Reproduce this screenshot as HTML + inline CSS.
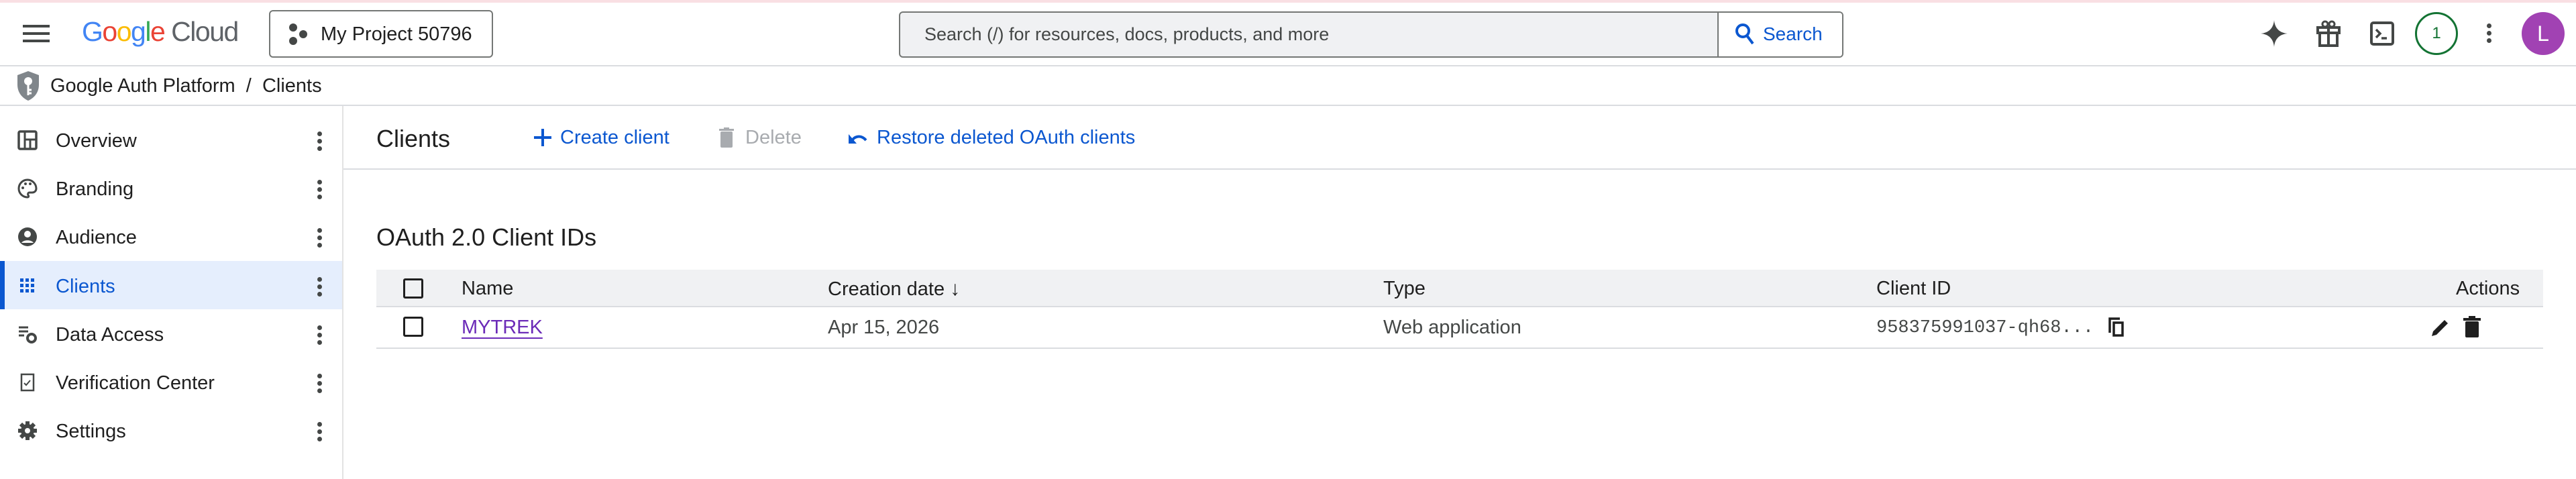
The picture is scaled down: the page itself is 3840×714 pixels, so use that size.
<!DOCTYPE html>
<html><head><meta charset="utf-8"><style>
*{margin:0;padding:0;box-sizing:border-box}
body{width:3840px;height:714px;background:#fff;font-family:"Liberation Sans",Arial,sans-serif;color:#1f1f1f;position:relative;overflow:hidden}
.a{position:absolute}
.t{white-space:nowrap}
.nav{position:absolute;left:0;width:510px;height:72px}
.nav .lab{position:absolute;left:83px;top:22px;font-size:29px;color:#1f1f1f}
.nav .ic{position:absolute;left:26px;top:22px;width:30px;height:30px}
.dots{position:absolute;width:8px}
.dots i{display:block;width:7px;height:7px;border-radius:50%;background:#444746;margin:0 0 4px 0}
.cb{position:absolute;width:30px;height:30px;border:3.5px solid #1f1f1f;border-radius:3px}
</style></head><body>
<div class="a" style="left:0;top:0;width:3840px;height:4px;background:#f9dfe3"></div>
<div class="a" style="left:34px;top:37px;width:40px;height:26px">
<div style="height:4px;background:#444746;margin-bottom:7px"></div><div style="height:4px;background:#444746;margin-bottom:7px"></div><div style="height:4px;background:#444746"></div></div>
<div class="a t" style="left:122px;top:24px;font-size:41px;letter-spacing:-1.5px"><span style="color:#4285f4">G</span><span style="color:#ea4335">o</span><span style="color:#fbbc04">o</span><span style="color:#4285f4">g</span><span style="color:#34a853">l</span><span style="color:#ea4335">e</span> <span style="color:#5f6368">Cloud</span></div>
<div class="a" style="left:401px;top:15px;width:334px;height:71px;border:2px solid #747775;border-radius:6px"></div>
<svg class="a" style="left:428px;top:34px" width="34" height="34" viewBox="0 0 34 34"><circle cx="9" cy="7" r="6" fill="#444746"/><circle cx="24" cy="17" r="6" fill="#444746"/><circle cx="9" cy="27" r="6" fill="#444746"/></svg>
<div class="a t" style="left:478px;top:35px;font-size:29px;color:#1f1f1f">My Project 50796</div>
<div class="a" style="left:1340px;top:17px;width:1408px;height:69px;border:2px solid #747775;border-radius:6px;background:#f0f1f3;overflow:hidden">
<div class="a" style="left:1218px;top:0;width:190px;height:69px;background:#fff;border-left:2px solid #747775"></div></div>
<div class="a t" style="left:1378px;top:36px;font-size:27px;color:#444746">Search (/) for resources, docs, products, and more</div>
<svg class="a" style="left:2586px;top:34px" width="30" height="34" viewBox="0 0 30 34"><circle cx="12" cy="12" r="9" fill="none" stroke="#0b57d0" stroke-width="4"/><path d="M18 19l9 12" stroke="#0b57d0" stroke-width="4"/></svg>
<div class="a t" style="left:2628px;top:35px;font-size:28px;color:#0b57d0">Search</div>
<svg class="a" style="left:3370px;top:30px" width="40" height="40" viewBox="0 0 40 40"><path d="M20 0C21 12 28 19 40 20 28 21 21 28 20 40 19 28 12 21 0 20 12 19 19 12 20 0Z" fill="#444746"/></svg>
<svg class="a" style="left:3452px;top:30px" width="38" height="40" viewBox="0 0 38 40"><rect x="3" y="11" width="32" height="8" fill="none" stroke="#444746" stroke-width="4"/><rect x="6" y="19" width="26" height="19" fill="none" stroke="#444746" stroke-width="4"/><path d="M19 11v27" stroke="#444746" stroke-width="4"/><circle cx="14" cy="6" r="4" fill="none" stroke="#444746" stroke-width="3"/><circle cx="24" cy="6" r="4" fill="none" stroke="#444746" stroke-width="3"/></svg>
<svg class="a" style="left:3533px;top:32px" width="36" height="36" viewBox="0 0 36 36"><rect x="2" y="2" width="32" height="32" rx="3" fill="none" stroke="#444746" stroke-width="4"/><path d="M9 12l6 6-6 6" fill="none" stroke="#444746" stroke-width="3.5"/><path d="M17 25h8" stroke="#444746" stroke-width="3.5"/></svg>
<div class="a" style="left:3600px;top:18px;width:64px;height:64px;border:3.5px solid #137333;border-radius:50%;text-align:center;line-height:57px;font-size:24px;color:#137333">1</div>
<div class="dots" style="left:3707px;top:35px"><i></i><i></i><i></i></div>
<div class="a" style="left:3759px;top:18px;width:64px;height:64px;border-radius:50%;background:#a142b3;color:#fff;text-align:center;line-height:64px;font-size:32px">L</div>
<div class="a" style="left:0;top:97px;width:3840px;height:2px;background:#dadce0"></div>
<svg class="a" style="left:22px;top:104px" width="40" height="48" viewBox="0 0 40 48"><path d="M20 2L36 8v14c0 12-7 20-16 24C11 42 4 34 4 22V8z" fill="#80868b"/><circle cx="20" cy="17" r="6" fill="#fff"/><path d="M20 22v16M20 30h5M20 35h5" stroke="#fff" stroke-width="3"/></svg>
<div class="a t" style="left:75px;top:112px;font-size:29px;color:#1f1f1f">Google Auth Platform &nbsp;/&nbsp; Clients</div>
<div class="a" style="left:0;top:156px;width:3840px;height:2px;background:#dadce0"></div>
<div class="a" style="left:510px;top:158px;width:2px;height:556px;background:#e3e3e3"></div>
<div class="nav" style="top:172px"><svg class="ic" viewBox="0 0 30 30"><rect x="2" y="2" width="26" height="26" rx="2" fill="none" stroke="#444746" stroke-width="3.5"/><path d="M11 3v24M11 14h16M19 14v13" stroke="#444746" stroke-width="3"/></svg><div class="lab">Overview</div><div class="dots" style="left:473px;top:24px"><i></i><i></i><i></i></div></div>
<div class="nav" style="top:244px"><svg class="ic" viewBox="0 0 30 30"><path d="M15 2a13 13 0 100 26c2 0 2-2 1-3-1-2 0-4 2-4h4c4 0 6-3 6-6C28 8 22 2 15 2z" fill="none" stroke="#444746" stroke-width="3"/><circle cx="8" cy="14" r="2" fill="#444746"/><circle cx="12" cy="8" r="2" fill="#444746"/><circle cx="19" cy="8" r="2" fill="#444746"/></svg><div class="lab">Branding</div><div class="dots" style="left:473px;top:24px"><i></i><i></i><i></i></div></div>
<div class="nav" style="top:316px"><svg class="ic" viewBox="0 0 30 30"><circle cx="15" cy="15" r="14" fill="#444746"/><circle cx="15" cy="11" r="5" fill="#fff"/><path d="M6 24c3-5 15-5 18 0" fill="#fff"/></svg><div class="lab">Audience</div><div class="dots" style="left:473px;top:24px"><i></i><i></i><i></i></div></div>
<div class="nav" style="top:389px;background:#e5eefd"><div class="a" style="left:0;top:0;width:7px;height:72px;background:#0b57d0"></div><svg class="ic" viewBox="0 0 30 30"><g fill="#0b57d0"><rect x="4" y="4" width="5" height="5"/><rect x="12" y="4" width="5" height="5"/><rect x="20" y="4" width="5" height="5"/><rect x="4" y="12" width="5" height="5"/><rect x="12" y="12" width="5" height="5"/><rect x="20" y="12" width="5" height="5"/><rect x="4" y="20" width="5" height="5"/><rect x="12" y="20" width="5" height="5"/><rect x="20" y="20" width="5" height="5"/></g></svg><div class="lab" style="color:#0b57d0">Clients</div><div class="dots" style="left:473px;top:24px"><i></i><i></i><i></i></div></div>
<div class="nav" style="top:461px"><svg class="ic" viewBox="0 0 30 30"><path d="M2 5h14M2 11h14M2 17h8" stroke="#444746" stroke-width="3"/><circle cx="21" cy="21" r="6" fill="none" stroke="#444746" stroke-width="4"/></svg><div class="lab">Data Access</div><div class="dots" style="left:473px;top:24px"><i></i><i></i><i></i></div></div>
<div class="nav" style="top:533px"><svg class="ic" viewBox="0 0 30 30"><rect x="6" y="3" width="18" height="24" fill="none" stroke="#444746" stroke-width="2.5"/><path d="M10 16l3 3 6-7" fill="none" stroke="#444746" stroke-width="2"/></svg><div class="lab">Verification Center</div><div class="dots" style="left:473px;top:24px"><i></i><i></i><i></i></div></div>
<div class="nav" style="top:605px"><svg class="ic" viewBox="0 0 30 30"><circle cx="15" cy="15" r="10" fill="#444746"/><g stroke="#444746" stroke-width="6"><path d="M15 1v28M1 15h28M5 5l20 20M25 5L5 25"/></g><circle cx="15" cy="15" r="4" fill="#fff"/></svg><div class="lab">Settings</div><div class="dots" style="left:473px;top:24px"><i></i><i></i><i></i></div></div>
<div class="a t" style="left:561px;top:186px;font-size:36px">Clients</div>
<svg class="a" style="left:795px;top:191px" width="28" height="28" viewBox="0 0 28 28"><path d="M14 1v26M1 14h26" stroke="#0b57d0" stroke-width="4"/></svg>
<div class="a t" style="left:835px;top:189px;font-size:29px;color:#0b57d0">Create client</div>
<svg class="a" style="left:1072px;top:190px" width="22" height="30" viewBox="0 0 22 30"><rect x="2" y="6" width="18" height="24" rx="2" fill="#a8abaf"/><rect x="0" y="2" width="22" height="3" fill="#a8abaf"/><rect x="7" y="0" width="8" height="3" fill="#a8abaf"/></svg>
<div class="a t" style="left:1111px;top:189px;font-size:29px;color:#a8abaf">Delete</div>
<svg class="a" style="left:1264px;top:194px" width="30" height="24" viewBox="0 0 30 24"><path d="M5 18c3-9 14-12 22-3" fill="none" stroke="#0b57d0" stroke-width="4"/><path d="M1 6v14h12z" fill="#0b57d0"/></svg>
<div class="a t" style="left:1307px;top:189px;font-size:29px;color:#0b57d0">Restore deleted OAuth clients</div>
<div class="a" style="left:512px;top:251px;width:3328px;height:2px;background:#dadce0"></div>
<div class="a t" style="left:561px;top:333px;font-size:36px">OAuth 2.0 Client IDs</div>
<div class="a" style="left:561px;top:402px;width:3230px;height:56px;background:#f0f1f3;border-bottom:2px solid #dadce0"></div>
<div class="cb" style="left:601px;top:415px"></div>
<div class="a t" style="left:688px;top:414px;font-size:29px">Name</div>
<div class="a t" style="left:1234px;top:414px;font-size:29px">Creation date <span style="font-size:30px">&#8595;</span></div>
<div class="a t" style="left:2062px;top:414px;font-size:29px">Type</div>
<div class="a t" style="left:2797px;top:414px;font-size:29px">Client ID</div>
<div class="a t" style="left:3661px;top:414px;font-size:29px">Actions</div>
<div class="cb" style="left:601px;top:472px"></div>
<div class="a t" style="left:688px;top:472px;font-size:29px;color:#6b2bb8;text-decoration:underline;text-underline-offset:6px">MYTREK</div>
<div class="a t" style="left:1234px;top:472px;font-size:29px;color:#444746">Apr 15, 2026</div>
<div class="a t" style="left:2062px;top:472px;font-size:29px;color:#444746">Web application</div>
<div class="a t" style="left:2797px;top:474px;font-size:27px;font-family:'Liberation Mono',monospace;color:#444746">958375991037-qh68...</div>
<svg class="a" style="left:3142px;top:472px" width="26" height="30" viewBox="0 0 26 30"><path d="M3 24V3h15" fill="none" stroke="#1f1f1f" stroke-width="3.5"/><rect x="9" y="9" width="13" height="19" fill="none" stroke="#1f1f1f" stroke-width="3.5"/></svg>
<svg class="a" style="left:3622px;top:472px" width="32" height="32" viewBox="0 0 32 32"><path d="M3 29l2-7L22 5l5 5-17 17z" fill="#1f1f1f"/></svg>
<svg class="a" style="left:3672px;top:471px" width="26" height="32" viewBox="0 0 26 32"><rect x="3" y="8" width="20" height="24" rx="2" fill="#1f1f1f"/><rect x="0" y="3" width="26" height="4" fill="#1f1f1f"/><rect x="8" y="0" width="10" height="4" fill="#1f1f1f"/></svg>
<div class="a" style="left:561px;top:518px;width:3230px;height:2px;background:#dadce0"></div>
</body></html>
